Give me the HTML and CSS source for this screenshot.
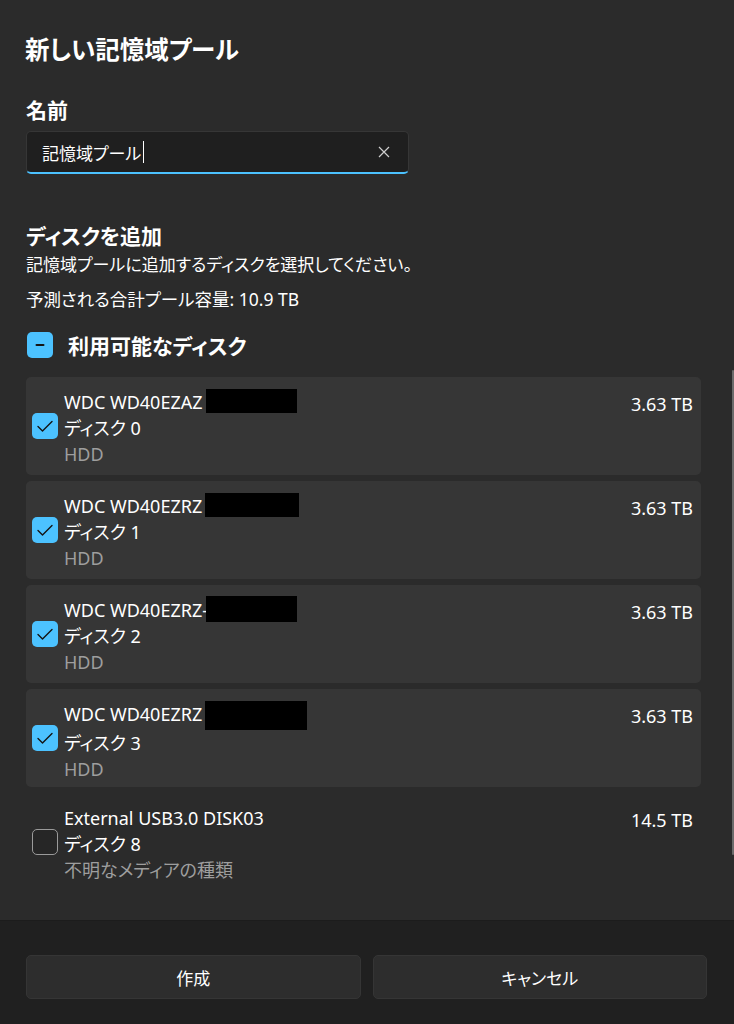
FILE: index.html
```html
<!DOCTYPE html>
<html lang="ja">
<head>
  <meta charset="UTF-8">
  <meta name="viewport" content="width=device-width, initial-scale=1.0">
  <title>新しい記憶域プール</title>
  <link rel="stylesheet" href="styles.css">
</head>
<body>
  <div class="dialog">
    <div class="content">
      <h1 class="title">新しい記憶域プール</h1>

      <label class="field-label" for="pool-name">名前</label>
      <div class="text-box">
        <input id="pool-name" class="text-input" type="text" value="記憶域プール">
        <span class="caret"></span>
        <svg class="clear-icon" viewBox="0 0 12 12">
          <path d="M1 1l10 10M11 1L1 11" />
        </svg>
      </div>

      <h2 class="section-title">ディスクを追加</h2>
      <p class="section-desc">記憶域プールに追加するディスクを選択してください。</p>
      <p class="capacity">予測される合計プール容量: 10.9 TB</p>

      <div class="group-header">
        <span class="check check-on">
          <svg viewBox="0 0 26 26"><path class="dash" d="M9.5 13h7" /></svg>
        </span>
        <span class="group-title">利用可能なディスク</span>
      </div>

      <ul class="disk-list">
        <li class="disk selected">
          <span class="check check-on">
            <svg viewBox="0 0 26 26"><path d="M6 13.5l4.5 4.5L20 8.5" /></svg>
          </span>
          <div class="disk-info">
            <div class="disk-name">WDC WD40EZAZ<span class="redact redact-a"></span></div>
            <div class="disk-id">ディスク 0</div>
            <div class="disk-type">HDD</div>
          </div>
          <div class="disk-size">3.63 TB</div>
        </li>
        <li class="disk selected">
          <span class="check check-on">
            <svg viewBox="0 0 26 26"><path d="M6 13.5l4.5 4.5L20 8.5" /></svg>
          </span>
          <div class="disk-info">
            <div class="disk-name">WDC WD40EZRZ<span class="redact redact-b"></span></div>
            <div class="disk-id">ディスク 1</div>
            <div class="disk-type">HDD</div>
          </div>
          <div class="disk-size">3.63 TB</div>
        </li>
        <li class="disk selected">
          <span class="check check-on">
            <svg viewBox="0 0 26 26"><path d="M6 13.5l4.5 4.5L20 8.5" /></svg>
          </span>
          <div class="disk-info">
            <div class="disk-name">WDC WD40EZRZ-<span class="redact redact-c"></span></div>
            <div class="disk-id">ディスク 2</div>
            <div class="disk-type">HDD</div>
          </div>
          <div class="disk-size">3.63 TB</div>
        </li>
        <li class="disk selected">
          <span class="check check-on">
            <svg viewBox="0 0 26 26"><path d="M6 13.5l4.5 4.5L20 8.5" /></svg>
          </span>
          <div class="disk-info">
            <div class="disk-name">WDC WD40EZRZ<span class="redact redact-d"></span></div>
            <div class="disk-id">ディスク 3</div>
            <div class="disk-type">HDD</div>
          </div>
          <div class="disk-size">3.63 TB</div>
        </li>
        <li class="disk">
          <span class="check"></span>
          <div class="disk-info">
            <div class="disk-name">External USB3.0 DISK03</div>
            <div class="disk-id">ディスク 8</div>
            <div class="disk-type">不明なメディアの種類</div>
          </div>
          <div class="disk-size">14.5 TB</div>
        </li>
      </ul>
      <div class="scrollbar"></div>
    </div>

    <div class="footer">
      <button class="btn">作成</button>
      <button class="btn">キャンセル</button>
    </div>
  </div>
</body>
</html>
```

FILE: styles.css
```css
:root {
  --bg: #2b2b2b;
  --bg-footer: #202020;
  --card: #363636;
  --text: #ffffff;
  --text-dim: #9e9e9e;
  --accent: #4cc2ff;
}

* {
  margin: 0;
  padding: 0;
  box-sizing: border-box;
}

body {
  font-family: "Noto Sans", "Noto Sans CJK JP", sans-serif;
  font-feature-settings: "palt";
  background-color: var(--bg);
  color: var(--text);
  width: 734px;
  height: 1024px;
  overflow: hidden;
}

.dialog {
  height: 1024px;
  display: flex;
  flex-direction: column;
}

.content {
  flex: 1;
  padding: 34px 26px 0 26px;
  position: relative;
}

.title {
  font-size: 24.5px;
  font-weight: 600;
  line-height: 32px;
  margin-left: -1px;
}

.field-label {
  display: block;
  font-size: 21px;
  font-weight: 600;
  line-height: 28px;
  margin-top: 30px;
}

.text-box {
  margin-top: 7px;
  width: 383px;
  height: 43px;
  display: flex;
  align-items: center;
  background-color: #1f1f1f;
  border: 1px solid #363636;
  border-bottom: 2px solid var(--accent);
  border-radius: 5px;
  padding: 0 18px 0 15px;
}

.text-input {
  font: inherit;
  font-size: 17px;
  color: var(--text);
  background: none;
  border: none;
  outline: none;
  width: 101px;
}

.caret {
  width: 1px;
  height: 22px;
  background-color: var(--text);
}

.clear-icon {
  width: 12px;
  height: 12px;
  margin-left: auto;
  fill: none;
  stroke: #cfcfcf;
  stroke-width: 1.2;
}

.section-title {
  font-size: 21px;
  font-weight: 600;
  line-height: 28px;
  margin-top: 48px;
}

.section-desc {
  font-size: 17px;
  line-height: 24px;
  margin-top: 3px;
}

.capacity {
  font-size: 17.5px;
  line-height: 24px;
  margin-top: 10px;
}

.group-header {
  display: flex;
  align-items: center;
  gap: 15px;
  margin-top: 17px;
  height: 34px;
  padding-left: 1px;
}

.group-title {
  font-size: 21px;
  font-weight: 600;
}

.check {
  width: 26px;
  height: 26px;
  flex-shrink: 0;
  border-radius: 5px;
  border: 1.5px solid #9a9a9a;
  background-color: #262626;
  display: flex;
  align-items: center;
  justify-content: center;
}

.check-on {
  background-color: var(--accent);
  border: none;
}

.check svg {
  width: 26px;
  height: 26px;
  fill: none;
  stroke: #141414;
  stroke-width: 1.4;
  stroke-linecap: round;
  stroke-linejoin: round;
}

.check .dash {
  stroke-width: 2;
}

.disk-list {
  list-style: none;
  margin-top: 15px;
  margin-right: 7px;
  display: flex;
  flex-direction: column;
  gap: 6px;
}

.disk {
  height: 98px;
  border-radius: 5px;
  display: flex;
  align-items: center;
  padding: 0 8px 0 6px;
  gap: 6px;
}

.disk.selected {
  background-color: var(--card);
}

.disk-info {
  flex: 1;
  font-size: 18px;
  line-height: 26px;
  padding-top: 3px;
}

.disk-name {
  display: flex;
  align-items: center;
}

.disk-type {
  color: var(--text-dim);
}

.disk-size {
  align-self: flex-start;
  margin-top: 14px;
  font-size: 18px;
  line-height: 26px;
}

.redact {
  display: inline-block;
  background-color: #000000;
  height: 24px;
  margin-left: 3px;
}

.redact-a {
  width: 91px;
  margin-top: -2px;
}

.redact-b {
  width: 94px;
  margin-top: -2px;
}

.redact-c {
  width: 91px;
  height: 26px;
  margin-left: -2px;
  margin-top: -1px;
}

.redact-d {
  width: 102px;
  height: 29px;
  margin-top: 4px;
}

.scrollbar {
  position: absolute;
  right: 0;
  top: 370px;
  width: 2px;
  height: 485px;
  background-color: #6b6b6b;
  border-radius: 1px;
}

.footer {
  height: 104px;
  background-color: var(--bg-footer);
  border-top: 1px solid #1c1c1c;
  padding: 34px 27px 0 26px;
  display: grid;
  grid-template-columns: 1fr 1fr;
  gap: 12px;
  align-items: start;
}

.btn {
  height: 44px;
  font: inherit;
  font-size: 17px;
  color: var(--text);
  background-color: #2d2d2d;
  border: 1px solid #353535;
  border-radius: 5px;
}
```
